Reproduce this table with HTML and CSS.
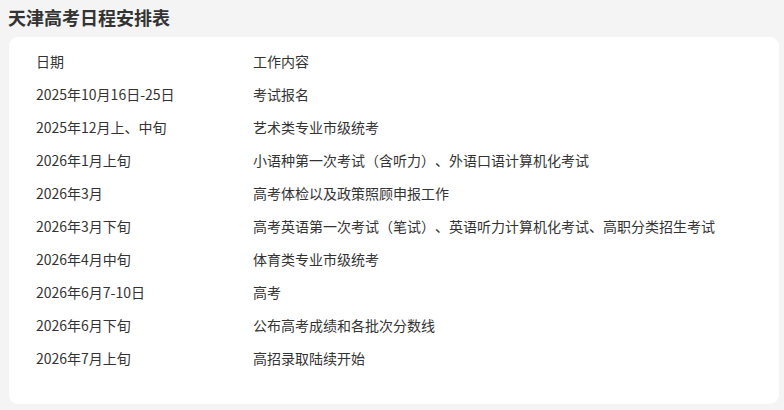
FILE: index.html
```html
<!DOCTYPE html>
<html lang="zh-CN">
<head>
<meta charset="utf-8">
<title>天津高考日程安排表</title>
<link rel="stylesheet" href="styles.css">
</head>
<body>
<h1 class="title">天津高考日程安排表</h1>
<div class="card">
  <div class="table">
    <div class="row"><span>日期</span><span>工作内容</span></div>
    <div class="row"><span>2025年10月16日-25日</span><span>考试报名</span></div>
    <div class="row"><span>2025年12月上、中旬</span><span>艺术类专业市级统考</span></div>
    <div class="row"><span>2026年1月上旬</span><span>小语种第一次考试（含听力）、外语口语计算机化考试</span></div>
    <div class="row"><span>2026年3月</span><span>高考体检以及政策照顾申报工作</span></div>
    <div class="row"><span>2026年3月下旬</span><span>高考英语第一次考试（笔试）、英语听力计算机化考试、高职分类招生考试</span></div>
    <div class="row"><span>2026年4月中旬</span><span>体育类专业市级统考</span></div>
    <div class="row"><span>2026年6月7-10日</span><span>高考</span></div>
    <div class="row"><span>2026年6月下旬</span><span>公布高考成绩和各批次分数线</span></div>
    <div class="row"><span>2026年7月上旬</span><span>高招录取陆续开始</span></div>
  </div>
</div>
</body>
</html>
```
FILE: styles.css
```css
html, body {
  margin: 0;
  padding: 0;
  background: #f4f4f4;
}
body {
  width: 784px;
  height: 410px;
  overflow: hidden;
  font-family: "Noto Sans CJK SC", "Noto Sans", sans-serif;
  color: #333;
  text-spacing-trim: space-all;
}
.title {
  margin: 0;
  padding: 4px 0 0 8px;
  height: 34px;
  box-sizing: border-box;
  font-size: 18px;
  line-height: 26px;
  font-weight: 700;
  color: #333;
}
.card {
  margin: 3px 0 0 9px;
  width: 770px;
  height: 367px;
  box-sizing: border-box;
  background: #fff;
  border-radius: 9px;
  padding: 7px 0 0 27px;
}
.table {
  display: flex;
  flex-direction: column;
}
.row {
  display: grid;
  grid-template-columns: 217px 1fr;
  height: 33px;
  align-items: center;
  font-size: 14px;
  line-height: 20px;
}
```
